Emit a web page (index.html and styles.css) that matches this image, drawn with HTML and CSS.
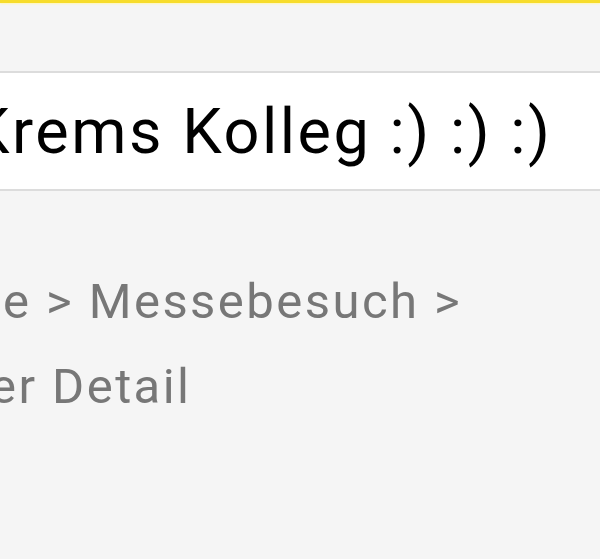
FILE: index.html
```html
<!DOCTYPE html>
<html lang="de">
<head>
  <meta charset="UTF-8">
  <title>Krems Kolleg</title>
  <link rel="stylesheet" href="styles.css">
</head>
<body>
  <div class="status-bar"></div>

  <div class="title-bar">
    <div class="title">Krems Kolleg :) :) :)</div>
  </div>

  <div class="breadcrumb">
    <div class="crumb-line first">e &gt; Messebesuch &gt;</div>
    <div class="crumb-line second">er Detail</div>
  </div>
</body>
</html>
```

FILE: styles.css
```css
body {
  font-family: Roboto, "Noto Sans", sans-serif;
  background-color: #f5f5f5;
  margin: 0;
  padding: 0;
  overflow: hidden;
}

.status-bar {
  height: 3px;
  background-color: #f7dc2b;
  box-shadow: 0 1px 2px #fff6b8;
  margin-bottom: 68px;
}

.title-bar {
  background-color: white;
  border-top: 2px solid #dcdcdc;
  border-bottom: 2px solid #dcdcdc;
  height: 116px;
  display: flex;
  align-items: center;
  overflow: hidden;
}

.title {
  font-size: 63px;
  color: #000;
  letter-spacing: 0.04em;
  white-space: nowrap;
  margin-left: -30px;
}

.breadcrumb {
  margin-top: 68px;
  color: #777;
  font-size: 49px;
  line-height: 85px;
  letter-spacing: 0.05em;
  white-space: nowrap;
}

.crumb-line.first {
  margin-left: 3px;
}

.crumb-line.second {
  margin-left: -10px;
}
```
